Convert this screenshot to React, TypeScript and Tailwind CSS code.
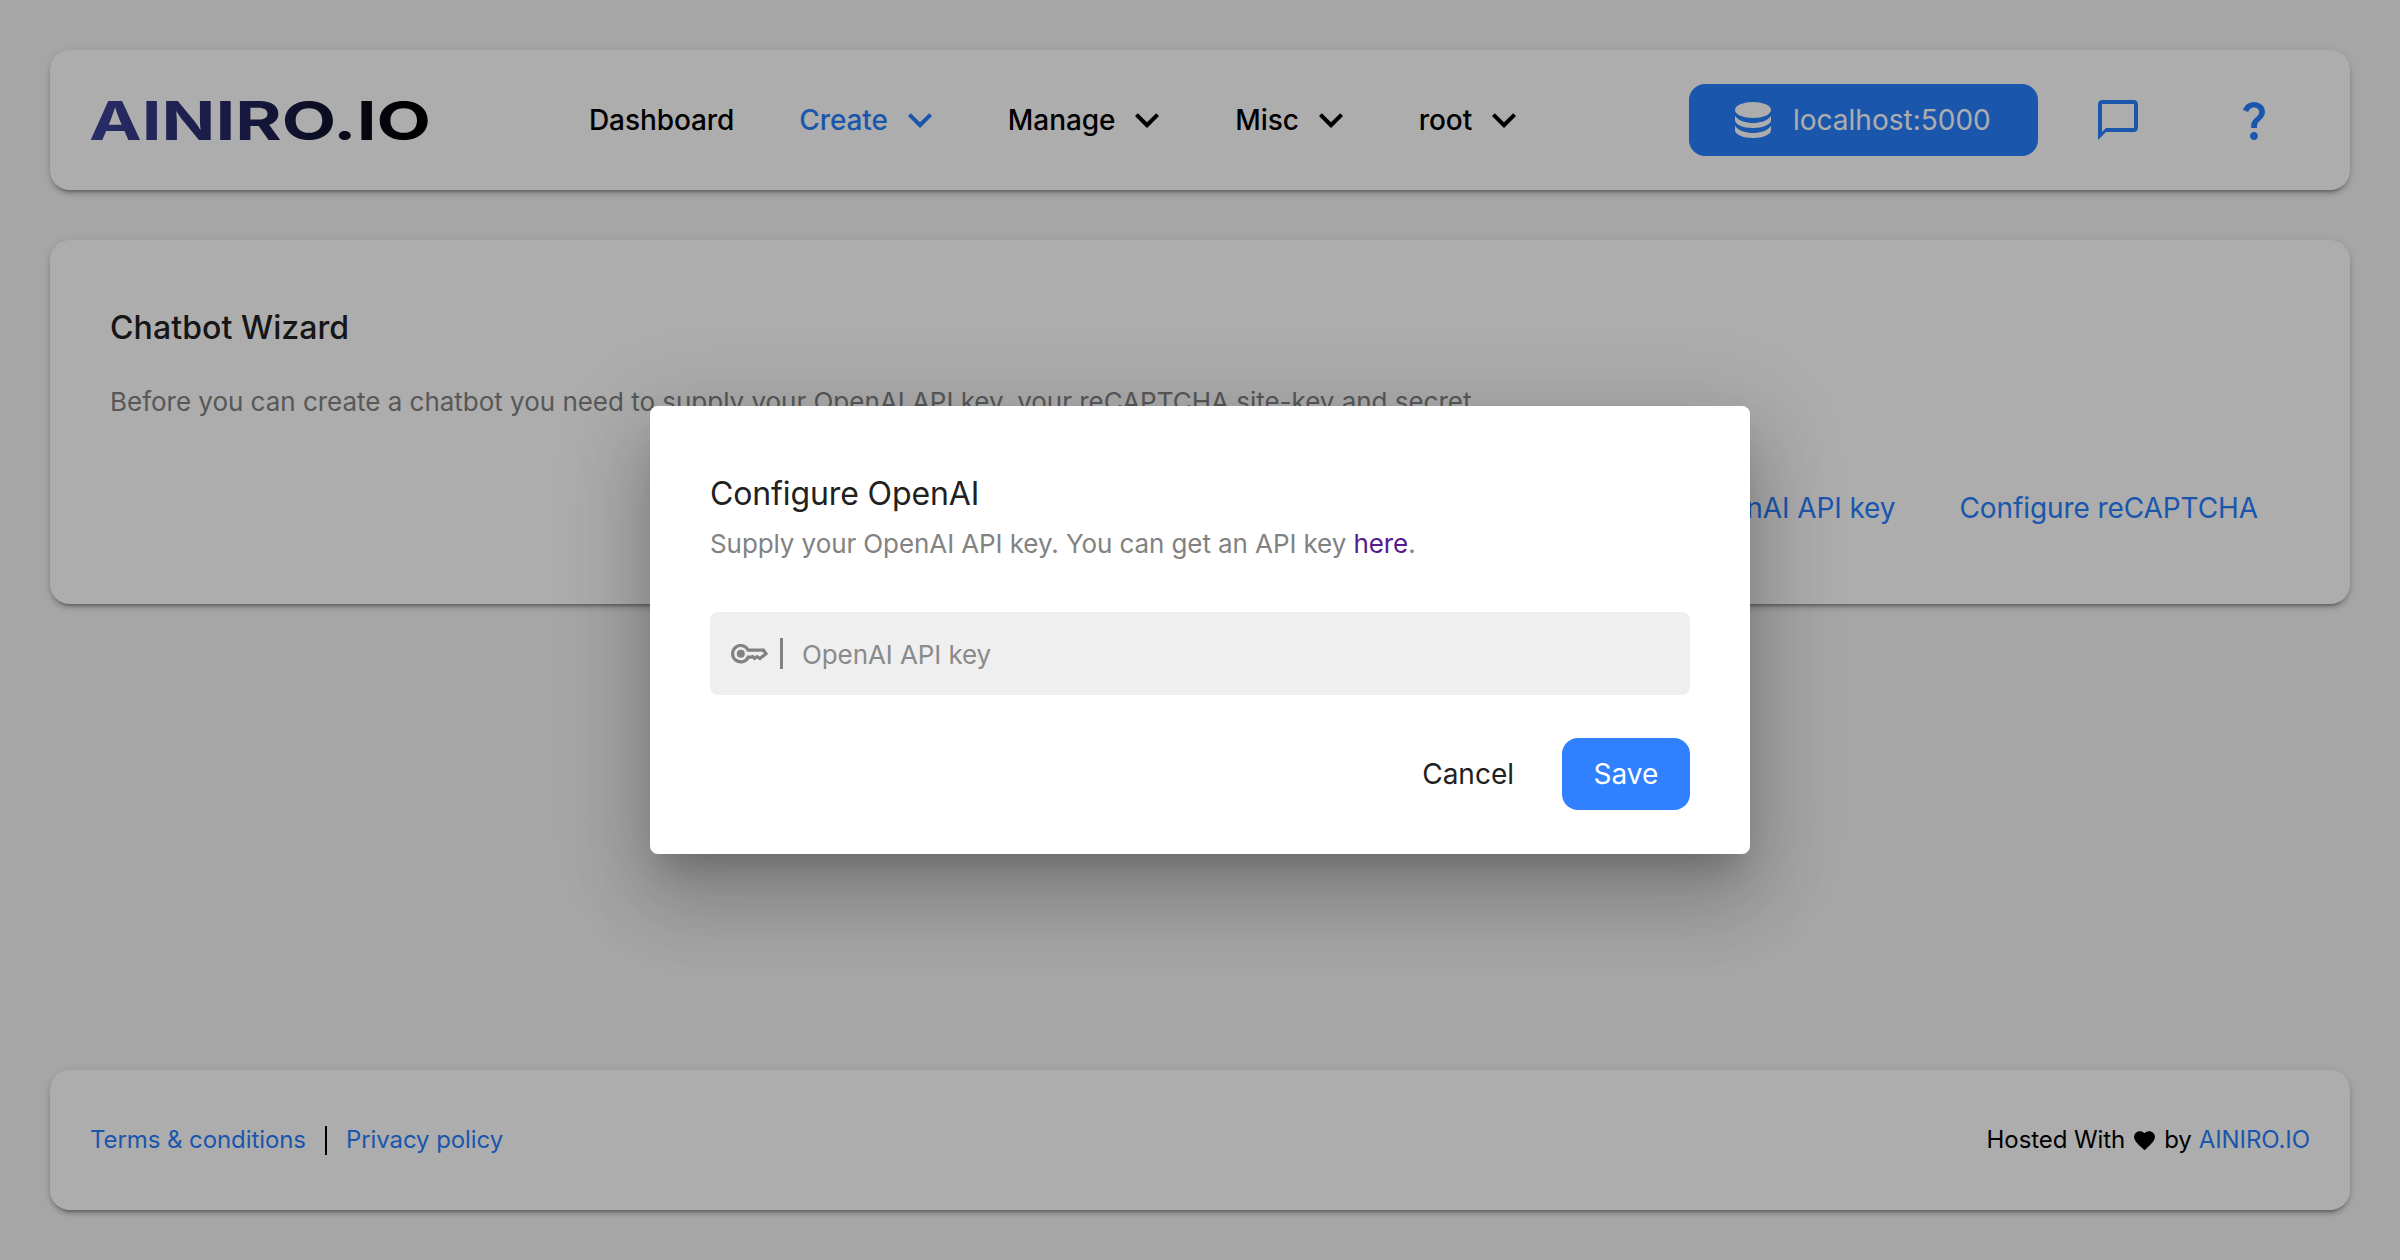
import React from "react";
import { MdKeyboardArrowDown, MdChatBubbleOutline, MdQuestionMark, MdFavorite } from "react-icons/md";

const card =
  "rounded-[20px] bg-white shadow-[0_6px_2px_-4px_rgba(0,0,0,0.2),0_4px_4px_rgba(0,0,0,0.14),0_2px_10px_rgba(0,0,0,0.12)]";

function Logo() {
  return (
    <svg width="340" height="72" viewBox="0 0 340 72" className="shrink-0 overflow-visible" aria-label="AINIRO.IO">
      <defs>
        <linearGradient id="brand" x1="0" y1="0" x2="340" y2="0" gradientUnits="userSpaceOnUse">
          <stop offset="0" stopColor="#3e449c" />
          <stop offset="0.45" stopColor="#22255f" />
          <stop offset="0.95" stopColor="#000000" />
        </linearGradient>
      </defs>
      <text
        x="-1"
        y="55.5"
        textLength="342"
        lengthAdjust="spacingAndGlyphs"
        fill="url(#brand)"
        fontFamily="Inter, sans-serif"
        fontWeight="700"
        fontSize="54"
      >
        AINIRO.IO
      </text>
    </svg>
  );
}

function DatabaseIcon() {
  return (
    <svg viewBox="0 0 36 36" fill="currentColor" className="size-9">
      <ellipse cx="18" cy="8" rx="18" ry="8" />
      <path d="M0 14C4 19 11 21 18 21S32 19 36 14V18C36 22.500 28 26 18 26S0 22.500 0 18Z" />
      <path d="M0 24C4 29 11 31 18 31S32 29 36 24V28C36 32.500 28 36 18 36S0 32.500 0 28Z" />
    </svg>
  );
}

function KeyIcon() {
  return (
    <svg viewBox="0 0 38 20" fill="none" stroke="currentColor" strokeWidth="3.200" className="h-5 w-[38px]">
      <path d="M17.200 6.200A8.200 8.200 0 1 0 17.200 13.200H19.500L21.500 12.600L23.500 14.500L26 12.600L29 14.500L35 9.700L32.500 6.200Z" />
      <circle cx="9.800" cy="9.700" r="4" fill="currentColor" stroke="none" />
    </svg>
  );
}

function NavItem({ label, active, menu = true }: { label: string; active?: boolean; menu?: boolean }) {
  return (
    <div className={active ? "ml-px flex items-center text-[#297fff]" : "flex items-center text-black"}>
      <span>{label}</span>
      {menu && <MdKeyboardArrowDown className="ml-2 size-12" />}
    </div>
  );
}

export default function App() {
  return (
    <div className="relative flex h-[1260px] w-[2400px] flex-col overflow-hidden bg-[#f5f5f5] p-[50px] font-['Inter',sans-serif]">
      <header className={`${card} flex h-[140px] shrink-0 items-center pl-[40px]`}>
        <Logo />
        <nav className="ml-[159px] flex items-center gap-[64px] text-[28px] font-medium tracking-[-0.090px]">
          <NavItem label="Dashboard" menu={false} />
          <NavItem label="Create" active />
          <NavItem label="Manage" />
          <NavItem label="Misc" />
          <NavItem label="root" />
        </nav>
        <div className="mr-[72px] ml-auto flex items-center text-[#297fff]">
          <button className="flex h-[72px] w-[349px] items-center rounded-2xl bg-[#297fff] pl-[46px] text-[28px] text-white">
            <DatabaseIcon />
            <span className="ml-[22px]">localhost:5000</span>
          </button>
          <MdChatBubbleOutline className="ml-[56px] size-12" />
          <MdQuestionMark className="ml-[88px] size-12" />
        </div>
      </header>

      <main className={`${card} mt-[50px] flex h-[364px] shrink-0 flex-col px-[60px] pt-[66px]`}>
        <h1 className="text-[32px] leading-[44px] font-medium tracking-[0.080px] text-[#212121]">Chatbot Wizard</h1>
        <p className="mt-[32px] text-[26px] leading-[40px] tracking-[-0.020px] text-[#828282]">
          Before you can create a chatbot you need to supply your OpenAI API key, your reCAPTCHA site-key and secret
        </p>
        <div className="mt-[64px] mr-[32px] flex justify-end gap-[64px] text-[28px] leading-[44px] tracking-[-0.090px] text-[#297fff]">
          <span>Configure OpenAI API key</span>
          <span>Configure reCAPTCHA</span>
        </div>
      </main>

      <footer
        className={`${card} mt-auto flex h-[140px] shrink-0 items-center px-[40px] text-[24px] tracking-[-0.080px]`}
      >
        <span className="text-[#297fff]">Terms &amp; conditions</span>
        <span className="mx-[19px] h-[29px] w-[2px] bg-black" />
        <span className="text-[#297fff]">Privacy policy</span>
        <div className="ml-auto flex items-center">
          <span>Hosted With</span>
          <MdFavorite className="mx-[7px] size-[25px]" />
          <span>by</span>
          <span className="ml-[7px] text-[#297fff]">AINIRO.IO</span>
        </div>
      </footer>

      <div className="absolute inset-0 flex items-start justify-center bg-black/32 pt-[406px]">
        <section
          role="dialog"
          className="h-[448px] w-[1100px] rounded-lg bg-white px-[60px] pt-[66px] shadow-[0_22px_30px_-14px_rgba(0,0,0,0.2),0_48px_76px_6px_rgba(0,0,0,0.14),0_18px_92px_16px_rgba(0,0,0,0.12)]"
        >
          <h2 className="text-[32px] leading-[44px] tracking-[-0.120px] text-[#212121]">Configure OpenAI</h2>
          <p className="mt-[8px] text-[26px] leading-[40px] tracking-[-0.090px] text-[#828282]">
            Supply your OpenAI API key. You can get an API key <span className="text-[#551a8b]">here</span>.
          </p>
          <div className="mt-[48px] flex h-[83px] items-center rounded-lg bg-[#efefef] pl-[21px] text-[26px] tracking-[-0.090px] text-[#828282]">
            <KeyIcon />
            <span className="ml-[11px] h-[31px] w-[3px] bg-[#828282]" />
            <span className="ml-[19px] pt-[2px] text-[#8a8a8a]">OpenAI API key</span>
          </div>
          <div className="mt-[43px] flex items-center justify-end text-[28px]">
            <button className="text-[#212121]">Cancel</button>
            <button className="ml-[48px] h-[72px] w-[128px] rounded-2xl bg-[#3080ff] text-white">Save</button>
          </div>
        </section>
      </div>
    </div>
  );
}
